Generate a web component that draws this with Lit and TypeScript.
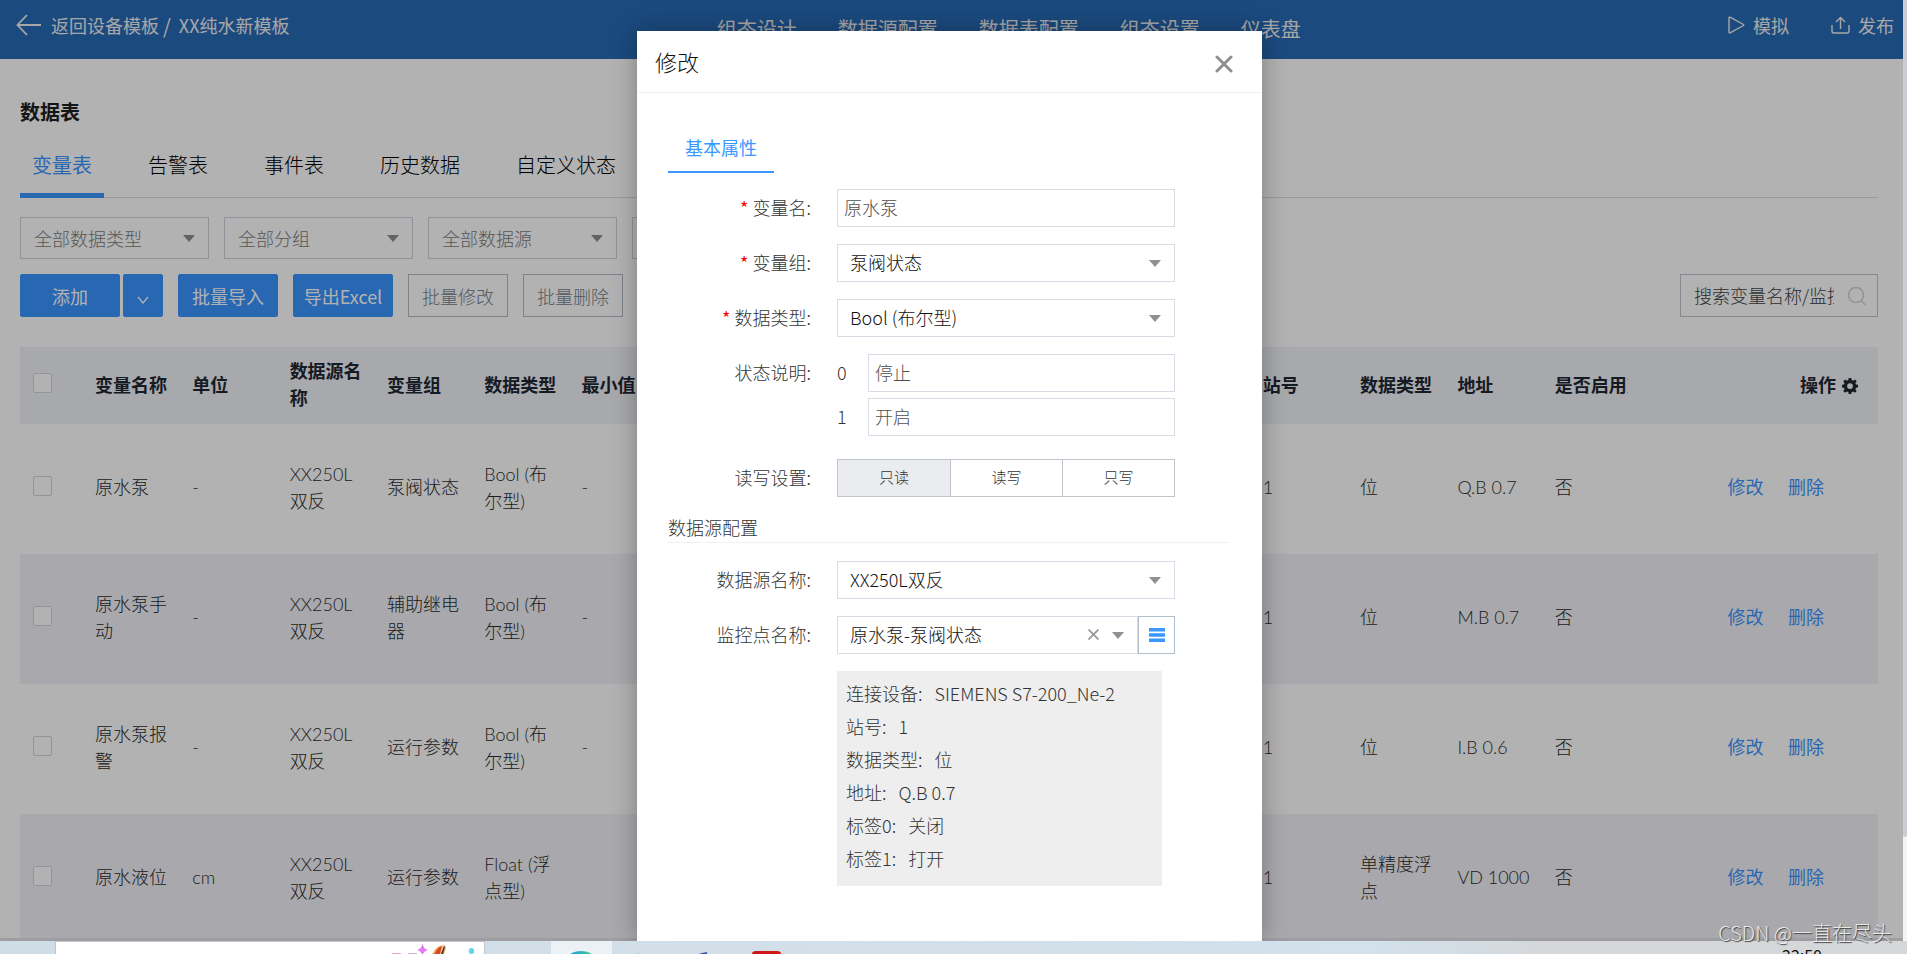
import { LitElement, html, css, svg, nothing } from "lit";
import { customElement } from "lit/decorators.js";
import { classMap } from "lit/directives/class-map.js";

const FONT = css`"Noto Sans CJK SC", sans-serif`;

const caret = html`<svg class="caret" viewBox="0 0 12 7" width="12" height="7" aria-hidden="true"><path d="M0 0h12L6 7z" fill="currentColor"/></svg>`;

interface Row {
  name: string;
  unit: string;
  source: string;
  group: string;
  type: string;
  min: string;
  station: string;
  dataType: string;
  address: string;
  enabled: string;
}

const ROWS: Row[] = [
  { name: "原水泵", unit: "-", source: "XX250L双反", group: "泵阀状态", type: "Bool (布尔型)", min: "-", station: "1", dataType: "位", address: "Q.B 0.7", enabled: "否" },
  { name: "原水泵手动", unit: "-", source: "XX250L双反", group: "辅助继电器", type: "Bool (布尔型)", min: "-", station: "1", dataType: "位", address: "M.B 0.7", enabled: "否" },
  { name: "原水泵报警", unit: "-", source: "XX250L双反", group: "运行参数", type: "Bool (布尔型)", min: "-", station: "1", dataType: "位", address: "I.B 0.6", enabled: "否" },
  { name: "原水液位", unit: "cm", source: "XX250L双反", group: "运行参数", type: "Float (浮点型)", min: "", station: "1", dataType: "单精度浮点", address: "VD 1000", enabled: "否" },
];

const COLUMNS: [string, keyof Row | null][] = [
  ["变量名称", "name"],
  ["单位", "unit"],
  ["数据源名称", "source"],
  ["变量组", "group"],
  ["数据类型", "type"],
  ["最小值", "min"],
  ["", null],
  ["", null],
  ["", null],
  ["", null],
  ["", null],
  ["", null],
  ["站号", "station"],
  ["数据类型", "dataType"],
  ["地址", "address"],
  ["是否启用变", "enabled"],
];

@customElement("top-bar")
class TopBar extends LitElement {
  static styles = css`
    :host { display: block; background: #286ab7; color: #f0f0f0; font-family: ${FONT}; font-weight: 400; }
    .bar { display: flex; justify-content: space-between; height: 59px; padding: 0 9px 0 16px; }
    a { color: inherit; text-decoration: none; }
    .back, .actions { display: flex; align-items: center; height: 50px; font-size: 18px; line-height: 27px; white-space: nowrap; }
    .back a { display: flex; align-items: center; gap: 10px; }
    .slash { padding: 0 8px 0 4px; font-size: 20px; }
    nav { display: flex; gap: 41px; height: 58px; align-items: center; font-size: 20px; line-height: 30px; white-space: nowrap; }
    .actions { gap: 42px; }
    button { display: flex; align-items: center; gap: 8px; border: 0; padding: 0; background: none; color: inherit; font: inherit; }
    svg { display: block; }
  `;
  render() {
    return html`<header class="bar">
      <div class="back">
        <a href="#templates">
          <svg width="25" height="22" viewBox="0 0 25 22" fill="none" stroke="currentColor" stroke-width="1.800"><path d="M11 1 1.500 11 11 21M2 11h23"/></svg>
          <span>返回设备模板</span>
        </a>
        <span class="slash">/</span><span>XX纯水新模板</span>
      </div>
      <nav>
        ${["组态设计", "数据源配置", "数据表配置", "组态设置", "仪表盘"].map((t) => html`<a href="#nav">${t}</a>`)}
      </nav>
      <div class="actions">
        <button type="button">
          <svg width="17" height="18" viewBox="0 0 17 18" fill="none" stroke="currentColor" stroke-width="1.400" stroke-linejoin="round"><path d="M2 1.200q-1-.2-1 .8v14q0 1 1 .8L15.500 9.500q.6-.5 0-1z"/></svg>
          模拟
        </button>
        <button type="button">
          <svg width="19" height="18" viewBox="0 0 19 18" fill="none" stroke="currentColor" stroke-width="1.400"><path d="M1 9v6q0 2 2 2h13q2 0 2-2V9M9.500 13V2M5 6l4.500-4.500L14 6"/></svg>
          发布
        </button>
      </div>
    </header>`;
  }
}

@customElement("data-page")
class DataPage extends LitElement {
  static styles = css`
    :host { display: block; background: #fff; color: #4a4a4a; font-family: ${FONT}; font-size: 18px; line-height: 27px; font-weight: 300; }
    .page { padding: 38px 25px 0 20px; }
    h1 { margin: 0; font-size: 20px; line-height: 30px; font-weight: 700; color: #1f1f1f; }
    .tabs { display: flex; gap: 32px; margin-top: 11px; border-bottom: 1px solid #dcdde3; }
    .tabs button { height: 60px; margin-bottom: -1px; border: 0; border-bottom: 5px solid transparent; padding: 0 12px 2px; background: none; color: #000; font: inherit; font-size: 20px; line-height: 30px; white-space: nowrap; }
    .tabs .on { color: #3a94ff; border-bottom-color: #3a94ff; font-weight: 400; }
    .filters { display: flex; gap: 15px; margin-top: 19px; }
    .filter { position: relative; width: 189px; color: #8f8f8f; }
    .filter select { width: 100%; height: 42px; border: 1px solid #cfd2dd; border-radius: 0; padding: 0 34px 0 13px; appearance: none; background: none; color: #7c7c7c; font: inherit; }
    .caret { position: absolute; right: 14px; top: 18px; pointer-events: none; }
    .tools { display: flex; justify-content: space-between; margin-top: 15px; }
    .group { display: flex; gap: 15px; }
    .split { display: flex; gap: 3px; }
    .btn { width: 100px; height: 43px; border: 1px solid #3a94ff; border-radius: 2px; padding: 2px 0 0; background: #3a94ff; color: #fff; font: inherit; font-weight: 400; white-space: nowrap; }
    .btn.more { width: 40px; }
    .btn.plain { border-color: #b4bcc8; border-radius: 0; background: none; color: #74828f; font-weight: 300; }
    .search { display: flex; align-items: center; width: 198px; height: 43px; box-sizing: border-box; border: 1px solid #c3c5ce; padding: 0 10px 0 13px; gap: 13px; }
    .search input { flex: 1; min-width: 0; border: 0; padding: 0; outline: 0; background: none; font: inherit; color: #404246; }
    .search input::placeholder { color: #404246; opacity: 1; }
    table { width: 100%; margin-top: 30px; border-collapse: collapse; table-layout: fixed; }
    .c-check { width: 63px; }
    .c-ops { width: 238px; }
    th, td { box-sizing: border-box; padding: 0 12px 3px; text-align: left; vertical-align: middle; font-weight: 300; }
    th { height: 77px; background: #f1f2f7; color: #1f2733; font-weight: 700; }
    td { height: 130px; color: #2c2c2c; font-family: Lato, ${FONT}; }
    tr:nth-child(even) td { background: #f3f2f8; }
    .clip { overflow: hidden; white-space: nowrap; }
    input[type="checkbox"] { display: block; appearance: none; width: 19px; height: 20px; margin: 0 0 3px 1px; border: 1px solid #d5d3d8; border-radius: 2px; background: #fff; }
    .ops { text-align: right; white-space: nowrap; }
    th.ops { padding-right: 20px; }
    th svg { vertical-align: -2px; margin-left: 2px; }
    td.ops { padding-right: 54px; font-weight: 400; }
    td a { color: #3a94ff; text-decoration: none; margin-left: 20px; }
  `;

  gear = svg`<path fill="currentColor" fill-rule="evenodd" d="M6.700 0h2.600l.4 2.100 1.400.6L12.900 1.400l1.800 1.800-1.300 1.800.6 1.400 2 .4v2.600l-2 .4-.6 1.400 1.300 1.800-1.800 1.800-1.800-1.300-1.400.6-.4 2h-2.600l-.4-2-1.400-.6-1.800 1.300-1.800-1.800 1.200-1.800-.6-1.400-2.100-.4V6.800l2.100-.4.6-1.400-1.200-1.800 1.800-1.800 1.800 1.300 1.400-.6zM8 5.200a2.900 2.900 0 1 0 0 5.800 2.900 2.900 0 0 0 0-5.800z"/>`;

  render() {
    return html`<main class="page">
      <h1>数据表</h1>
      <div class="tabs" role="tablist">
        ${["变量表", "告警表", "事件表", "历史数据", "自定义状态"].map(
          (t, i) => html`<button type="button" role="tab" aria-selected=${i === 0} class=${classMap({ on: i === 0 })}>${t}</button>`
        )}
      </div>
      <div class="filters">
        ${["全部数据类型", "全部分组", "全部数据源", ""].map(
          (t) => html`<div class="filter"><select aria-label=${t || "筛选"}><option>${t}</option></select>${caret}</div>`
        )}
      </div>
      <div class="tools">
        <div class="group">
          <div class="split">
            <button type="button" class="btn">添加</button>
            <button type="button" class="btn more" aria-label="更多">
              <svg width="12" height="8" viewBox="0 0 12 8" fill="none" stroke="currentColor" stroke-width="1.300"><path d="M1 1l5 6 5-6"/></svg>
            </button>
          </div>
          <button type="button" class="btn">批量导入</button>
          <button type="button" class="btn">导出Excel</button>
          <button type="button" class="btn plain">批量修改</button>
          <button type="button" class="btn plain">批量删除</button>
        </div>
        <div class="search">
          <input type="text" aria-label="搜索" placeholder="搜索变量名称/监控点" />
          <svg width="20" height="20" viewBox="0 0 20 20" fill="none" stroke="#d3d3d8" stroke-width="1.600"><circle cx="9" cy="9" r="7.500"/><path d="M14 14.500l4.500 4.500"/></svg>
        </div>
      </div>
      <table>
        <colgroup>
          <col class="c-check" />
          ${COLUMNS.map(() => html`<col />`)}
          <col class="c-ops" />
        </colgroup>
        <thead>
          <tr>
            <th><input type="checkbox" aria-label="全选" /></th>
            ${COLUMNS.map(([t], i) => html`<th><div class=${classMap({ clip: i === 15 })}>${t}</div></th>`)}
            <th class="ops">操作 <svg width="16" height="16" viewBox="0 0 16 16">${this.gear}</svg></th>
          </tr>
        </thead>
        <tbody>
          ${ROWS.map(
            (r) => html`<tr>
              <td><input type="checkbox" aria-label=${r.name} /></td>
              ${COLUMNS.map(([, k]) => html`<td>${k ? r[k] : nothing}</td>`)}
              <td class="ops"><a href="#edit">修改</a> <a href="#delete">删除</a></td>
            </tr>`
          )}
        </tbody>
      </table>
    </main>`;
  }
}

@customElement("edit-dialog")
class EditDialog extends LitElement {
  static styles = css`
    :host { display: block; background: #fff; color: #333; font-family: ${FONT}; font-size: 18px; line-height: 27px; font-weight: 300; box-shadow: 0 0 24px rgba(0, 0, 0, 0.3); }
    header { display: flex; align-items: center; justify-content: space-between; height: 61px; padding: 0 29px 0 18px; border-bottom: 1px solid #f1f1f4; }
    h2 { margin: 0; font-size: 22px; line-height: 33px; font-weight: 300; color: #111; }
    button { font: inherit; padding: 0; }
    .close { display: flex; border: 0; background: none; color: #909090; margin-top: 4px; }
    .body { padding: 32px 32px 0 31px; }
    .tab { display: block; height: 48px; border: 0; border-bottom: 2px solid #3a97ff; padding: 0 17px 2px; background: none; color: #3a97ff; font-weight: 400; margin-bottom: 16px; }
    .row { display: grid; grid-template-columns: 143px 338px; column-gap: 26px; margin-bottom: 17px; }
    .label { line-height: 36px; text-align: right; white-space: nowrap; }
    .label i { color: #f00; font-style: normal; font-weight: 400; }
    input[type="text"], .select { box-sizing: border-box; width: 100%; height: 38px; border: 1px solid #d8dce6; border-radius: 0; background: #fff; font: inherit; }
    input[type="text"] { padding: 0 6px 2px; color: #505050; }
    .wrap { position: relative; color: #909090; }
    .select { appearance: none; padding: 0 36px 2px 12px; color: #111; }
    .caret { position: absolute; right: 14px; top: 16px; pointer-events: none; }
    .states { display: grid; grid-template-columns: 31px 1fr; row-gap: 6px; line-height: 37px; margin-bottom: 6px; }
    .seg { display: grid; grid-template-columns: repeat(3, 1fr); height: 36px; margin: 0; padding: 0; border: 1px solid #c0c4cc; font-size: 15px; line-height: 34px; text-align: center; }
    .seg label { padding-bottom: 2px; }
    .seg label + label { border-left: 1px solid #c0c4cc; }
    .seg input { position: absolute; opacity: 0; margin: 0; }
    .seg .on { background: #eaecf0; }
    h3 { margin: 0 0 18px; font-size: 18px; line-height: 27px; padding-bottom: 1px; font-weight: 300; border-bottom: 1px solid #f1f1f4; }
    .combo { display: grid; grid-template-columns: 301px 37px; }
    .clear { position: absolute; right: 39px; top: 13px; display: flex; border: 0; background: none; color: #999; }
    .list { display: flex; align-items: center; justify-content: center; border: 1px solid #b4bfcc; background: #fff; }
    dl { grid-column: 2; margin: 0; box-sizing: border-box; width: 325px; padding: 6px 9px 11px; background: #eee; line-height: 33px; }
    dl div { display: flex; gap: 12px; }
    dt, dd { margin: 0; }
  `;

  label(id: string, text: string, required = false) {
    return html`<label class="label" for=${id}>${required ? html`<i>*</i> ` : nothing}${text}:</label>`;
  }

  select(id: string, text: string, label: string) {
    return html`<div class="row">${this.label(id, label, id !== "src")}
      <div class="wrap"><select class="select" id=${id}><option>${text}</option></select>${caret}</div>
    </div>`;
  }

  render() {
    const info = [["连接设备", "SIEMENS S7-200_Ne-2"], ["站号", "1"], ["数据类型", "位"], ["地址", "Q.B 0.7"], ["标签0", "关闭"], ["标签1", "打开"]];
    return html`<section role="dialog" aria-label="修改">
      <header>
        <h2>修改</h2>
        <button type="button" class="close" aria-label="关闭">
          <svg width="18" height="18" viewBox="0 0 18 18" stroke="currentColor" stroke-width="3" stroke-linecap="round"><path d="M2 2l14 14M16 2L2 16"/></svg>
        </button>
      </header>
      <div class="body">
        <button type="button" class="tab">基本属性</button>
        <div class="row">${this.label("name", "变量名", true)}<input id="name" type="text" .value=${"原水泵"} /></div>
        ${this.select("group", "泵阀状态", "变量组")}
        ${this.select("type", "Bool (布尔型)", "数据类型")}
        <div class="row">
          <span class="label">状态说明:</span>
          <div class="states">
            <label for="s0">0</label><input id="s0" type="text" .value=${"停止"} />
            <label for="s1">1</label><input id="s1" type="text" .value=${"开启"} />
          </div>
        </div>
        <div class="row">
          <span class="label">读写设置:</span>
          <fieldset class="seg" aria-label="读写设置">
            ${["只读", "读写", "只写"].map(
              (t, i) => html`<label class=${classMap({ on: i === 0 })}><input type="radio" name="rw" ?checked=${i === 0} />${t}</label>`
            )}
          </fieldset>
        </div>
        <h3>数据源配置</h3>
        ${this.select("src", "XX250L双反", "数据源名称")}
        <div class="row">
          ${this.label("point", "监控点名称")}
          <div class="combo">
            <div class="wrap">
              <select class="select" id="point"><option>原水泵-泵阀状态</option></select>
              <button type="button" class="clear" aria-label="清除">
                <svg width="11" height="11" viewBox="0 0 11 11" stroke="currentColor" stroke-width="1.800"><path d="M.5.5l10 10M10.500.5l-10 10"/></svg>
              </button>
              ${caret}
            </div>
            <button type="button" class="list" aria-label="列表">
              <svg width="16" height="14" viewBox="0 0 16 14" fill="#3a97ff"><path d="M0 0h16v3.600H0zM0 5.200h16v3.600H0zM0 10.400h16v3.600H0z"/></svg>
            </button>
          </div>
        </div>
        <div class="row">
          <dl>${info.map(([k, v]) => html`<div><dt>${k}:</dt><dd>${v}</dd></div>`)}</dl>
        </div>
      </div>
    </section>`;
  }
}

@customElement("task-bar")
class TaskBar extends LitElement {
  static styles = css`
    :host { display: block; overflow: hidden; height: 13px; background: linear-gradient(90deg, #cfdde6, #d3dfe8 40%, #d2e1ec 72%, #d5d7d9 82%, #d6d7d9); font-family: ${FONT}; }
    .bar { display: flex; align-items: flex-start; padding: 0 85px 0 55px; }
    .box { display: flex; justify-content: flex-end; width: 430px; height: 20px; box-sizing: border-box; border: 1px solid #bfc4c8; background: #fff; }
    .tile { width: 61px; height: 13px; margin-left: 66px; background: #ebf1f5; }
    .icons { margin-left: 20px; }
    .clock { margin-left: auto; padding-top: 4px; font-size: 16px; line-height: 20px; color: #111; }
    svg { display: block; }
  `;
  render() {
    return html`<div class="bar">
      <div class="box">
        <svg width="100" height="12" viewBox="385 942 100 12">
          <path d="M393 953h9v1h-9z" fill="#f3a6bb"/><path d="M409 953h9v1h-9z" fill="#c9b4d8"/>
          <path d="M423.500 943.500q1 5.500 5.500 6.500-4.500 1-5.500 5.500-1-4.500-5.500-5.500 4.500-1 5.500-6.500z" fill="#e27bf5"/>
          <path d="M433 954c2-5 6-9 13-9 2 3 1 6-1 9z" fill="#f0c894"/>
          <path d="M435 954c2-4 4-7 8-8l-2 8z" fill="#dd4a22"/><path d="M442 954l3-8 1 1-2 7z" fill="#4a2c20"/>
          <ellipse cx="472.500" cy="951" rx="2.700" ry="3" fill="#5fd4ee"/>
        </svg>
      </div>
      <div class="tile">
        <svg width="61" height="13" viewBox="0 0 61 13"><defs><linearGradient id="e"><stop offset="0" stop-color="#1ba0e0"/><stop offset="1" stop-color="#41c98c"/></linearGradient></defs><ellipse cx="30" cy="16" rx="12" ry="6" fill="url(#e)"/></svg>
      </div>
      <svg class="icons" width="160" height="13" viewBox="632 941 160 13">
        <path d="M636 954q2-1 4 0z" fill="#63c9a8"/>
        <path d="M699 954l3-1 5-1v2z" fill="#3c55a5"/>
        <path d="M752 954q0-3 4-3h21q4 0 4 3z" fill="#cf1717"/>
      </svg>
      <span class="clock">22:50</span>
    </div>`;
  }
}

@customElement("app-root")
class AppRoot extends LitElement {
  static styles = css`
    :host { display: flex; flex-direction: column; position: relative; height: 100vh; overflow: hidden; background: #fff; }
    .screen { flex: 1; min-height: 0; display: flex; }
    .view { flex: 1; min-width: 0; position: relative; overflow: hidden; }
    .track { width: 4px; background: #f4f4f6; }
    .thumb { height: 89%; border-radius: 0 0 3px 3px; background: #cdccd4; }
    .mask { position: absolute; inset: 0; display: flex; justify-content: center; padding: 31px 4px 0 0; background: rgba(0, 0, 0, 0.3); }
    .hbar { position: absolute; left: 0; right: 0; bottom: 0; height: 3px; background: #e2e2e8; }
    edit-dialog { width: 625px; }
    .mark { position: absolute; right: 15px; bottom: 9px; font: 300 20px/24px ${FONT}; color: rgba(255, 255, 255, 0.8); text-shadow: 1px 1px 1px #444; }
  `;
  render() {
    return html`
      <div class="screen">
        <div class="view">
          <top-bar></top-bar>
          <data-page></data-page>
          <div class="hbar"></div>
          <div class="mask"><edit-dialog></edit-dialog></div>
        </div>
        <div class="track"><div class="thumb"></div></div>
      </div>
      <task-bar></task-bar>
      <div class="mark">CSDN @一直在尽头</div>
    `;
  }
}
